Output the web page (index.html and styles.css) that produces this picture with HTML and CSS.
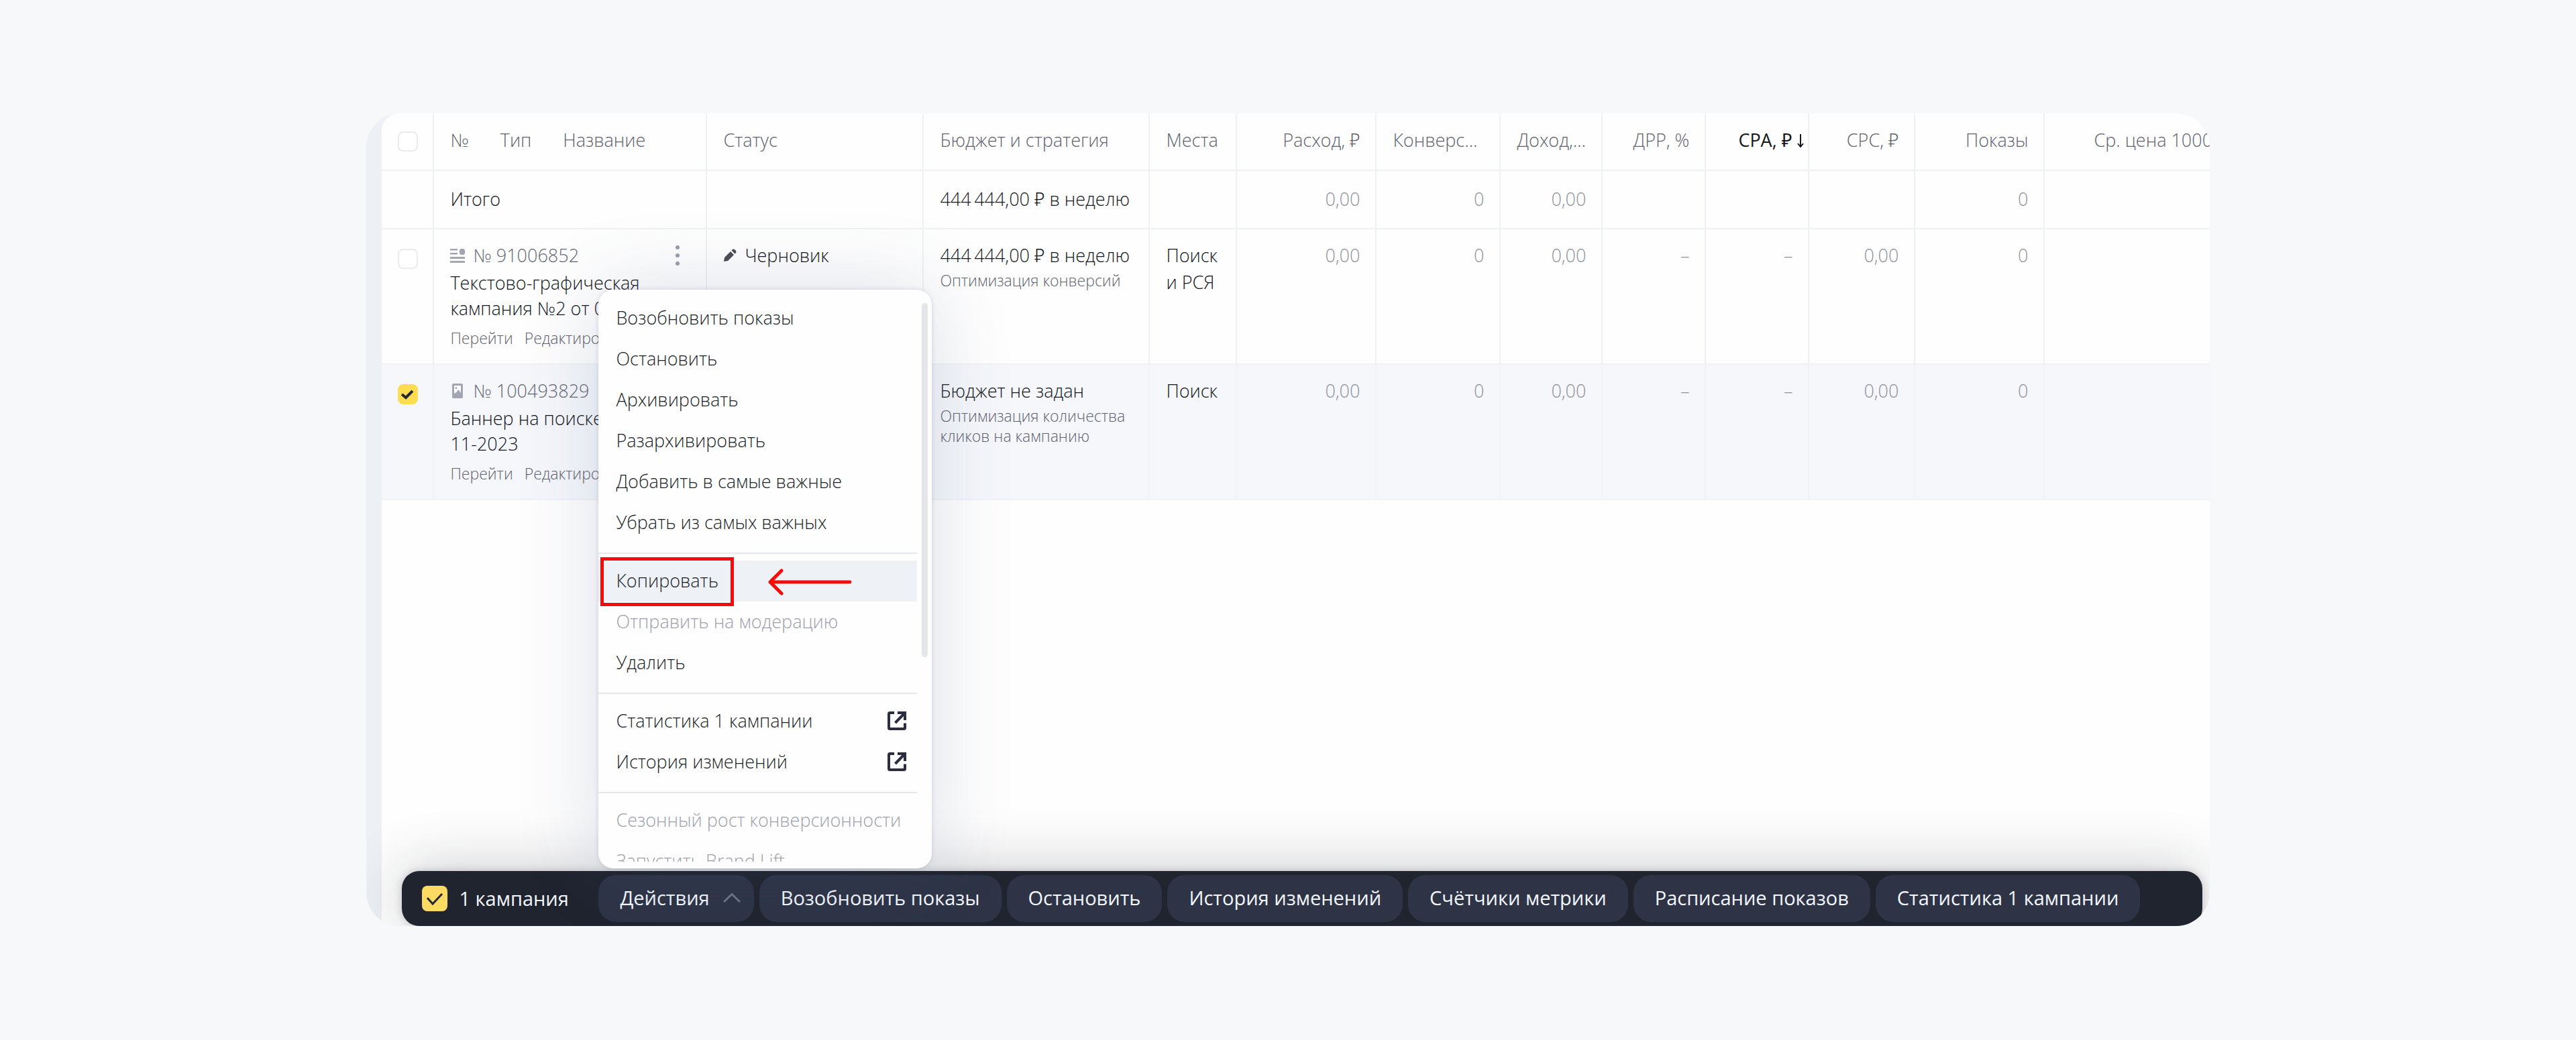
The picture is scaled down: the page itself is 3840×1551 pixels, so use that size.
FILE: index.html
```html
<!DOCTYPE html>
<html lang="ru">
<head>
<meta charset="utf-8">
<title>Кампании</title>
<link rel="stylesheet" href="styles.css">
</head>
<body>
<svg class="sprite" width="0" height="0" aria-hidden="true">
  <symbol id="external" viewBox="0 0 28 28">
    <path d="M10 2H3.500Q2 2 2 3.500V24.500Q2 26 3.500 26H24.500Q26 26 26 24.500V17.500" fill="none" stroke="currentColor" stroke-width="4"/>
    <path d="M15 2H26V13M25.500 2.500L11.500 17" fill="none" stroke="currentColor" stroke-width="4"/>
  </symbol>
</svg>
<main class="frame">
  <div class="sheet">
    <table class="campaigns">
      <colgroup>
        <col class="c-check"><col class="c-name"><col class="c-status"><col class="c-budget"><col class="c-places"><col class="c-cost"><col class="c-conv"><col class="c-income"><col class="c-drr"><col class="c-cpa"><col class="c-cpc"><col class="c-shows"><col>
      </colgroup>
      <thead>
        <tr>
          <th class="check"><input type="checkbox" class="tick" aria-label="Выбрать все"></th>
          <th><span class="titles"><span>№</span><span>Тип</span><span>Название</span></span></th>
          <th>Статус</th>
          <th>Бюджет и стратегия</th>
          <th>Места</th>
          <th class="num">Расход, ₽</th>
          <th>Конверс...</th>
          <th>Доход,...</th>
          <th class="num">ДРР, %</th>
          <th class="sorted"><span>CPA, ₽</span><svg width="10" height="22" viewBox="0 0 10 22" aria-hidden="true"><path d="M5 1V20M1 15L5 20L9 15" fill="none" stroke="currentColor" stroke-width="2"/></svg></th>
          <th class="num">CPC, ₽</th>
          <th class="num">Показы</th>
          <th class="cut">Ср. цена 1000</th>
        </tr>
      </thead>
      <tbody>
        <tr class="total">
          <td></td><td>Итого</td><td></td><td>444&thinsp;444,00 ₽ в неделю</td><td></td>
          <td class="num">0,00</td><td class="num">0</td><td class="num">0,00</td><td></td><td></td><td></td><td class="num">0</td><td></td>
        </tr>
        <tr class="item">
          <td class="check"><input type="checkbox" class="tick" aria-label="Кампания 91006852"></td>
          <td>
            <div class="ident">
              <svg width="22" height="22" viewBox="0 0 22 22" aria-hidden="true"><path d="M0 1H11V3.500H0ZM0 7H11V9.500H0ZM0 13H22V16H0ZM0 19H22V22H0Z" fill="currentColor"/><rect x="14" y="1" width="8" height="9" rx="3" fill="currentColor"/></svg>
              <span>№ 91006852</span>
              <button class="more" aria-label="Ещё"><svg width="6" height="30" viewBox="0 0 6 30"><circle cx="3" cy="3" r="3"/><circle cx="3" cy="15" r="3"/><circle cx="3" cy="27" r="3"/></svg></button>
            </div>
            <div class="name">Текстово-графическая<br>кампания №2 от 0</div>
            <div class="links"><a href="#">Перейти</a><a href="#">Редактиро</a></div>
          </td>
          <td><div class="status"><svg width="20" height="20" viewBox="0 0 20 20" aria-hidden="true"><path d="M1 19L2 13L11 4L16 9L7 18ZM12.500 2.500L14 1Q15.500 0 17 1L19 3Q20 4.500 19 6L17.500 7.500Z" fill="currentColor"/></svg>Черновик</div></td>
          <td>444&thinsp;444,00 ₽ в неделю<div class="sub">Оптимизация конверсий</div></td>
          <td>Поиск<br>и РСЯ</td>
          <td class="num">0,00</td><td class="num">0</td><td class="num">0,00</td><td class="num">–</td><td class="num">–</td><td class="num">0,00</td><td class="num">0</td><td></td>
        </tr>
        <tr class="item selected">
          <td class="check"><input type="checkbox" class="tick" checked aria-label="Кампания 100493829"></td>
          <td>
            <div class="ident">
              <svg width="22" height="22" viewBox="0 0 22 22" aria-hidden="true"><rect x="3" y="0" width="16" height="22" rx="2" fill="currentColor"/><path d="M6 3H16V14L12 9L9.500 13L6 15Z" fill="#fff"/><circle cx="9" cy="6.500" r="1.500" fill="currentColor"/></svg>
              <span>№ 100493829</span>
            </div>
            <div class="name">Баннер на поиске<br>11-2023</div>
            <div class="links"><a href="#">Перейти</a><a href="#">Редактиро</a></div>
          </td>
          <td></td>
          <td>Бюджет не задан<div class="sub">Оптимизация количества кликов на кампанию</div></td>
          <td>Поиск</td>
          <td class="num">0,00</td><td class="num">0</td><td class="num">0,00</td><td class="num">–</td><td class="num">–</td><td class="num">0,00</td><td class="num">0</td><td></td>
        </tr>
      </tbody>
    </table>

    <div class="bar">
      <label class="count"><input type="checkbox" class="tick big" checked>1 кампания</label>
      <div class="dropdown">
        <button class="action">Действия<svg width="26" height="14" viewBox="0 0 26 14" aria-hidden="true"><path d="M1 13L13 1.500L25 13" fill="none" stroke="#6b7488" stroke-width="3"/></svg></button>
        <div class="menu">
          <div class="scroll">
            <div class="group">
              <button>Возобновить показы</button>
              <button>Остановить</button>
              <button>Архивировать</button>
              <button>Разархивировать</button>
              <button>Добавить в самые важные</button>
              <button>Убрать из самых важных</button>
            </div>
            <div class="group">
              <button class="hover">Копировать
                <span class="mark"></span>
                <svg class="pointer" width="124" height="40" viewBox="0 0 124 40" aria-hidden="true"><path d="M122 20H4M20 3L3 20L20 37" fill="none" stroke="#f40b0b" stroke-width="5" stroke-linecap="round" stroke-linejoin="round"/></svg>
              </button>
              <button disabled>Отправить на модерацию</button>
              <button>Удалить</button>
            </div>
            <div class="group">
              <a href="#">Статистика 1 кампании<svg width="28" height="28"><use href="#external"/></svg></a>
              <a href="#">История изменений<svg width="28" height="28"><use href="#external"/></svg></a>
            </div>
            <div class="group">
              <button disabled>Сезонный рост конверсионности</button>
              <button disabled>Запустить Brand Lift</button>
            </div>
          </div>
          <span class="thumb"></span>
        </div>
      </div>
      <button class="action">Возобновить показы</button>
      <button class="action">Остановить</button>
      <button class="action">История изменений</button>
      <button class="action">Счётчики метрики</button>
      <button class="action">Расписание показов</button>
      <button class="action">Статистика 1 кампании</button>
    </div>
  </div>
</main>
</body>
</html>
```
FILE: styles.css
```css
* { box-sizing: border-box; }

body {
  margin: 0;
  min-height: 100vh;
  display: flex;
  padding: 169px 14.230% 170px;
  background: #f6f8fa;
  color: #14161d;
  font: 300 27px/40px "Open Sans", "Noto Sans", sans-serif;
}

.sprite { position: absolute; }

button, input { font: inherit; color: inherit; margin: 0; }
button { border: 0; background: none; padding: 0; text-align: left; }
a { color: inherit; text-decoration: none; }

.frame {
  flex: 1;
  min-width: 0;
  display: flex;
  padding-left: 23px;
  overflow: hidden;
  border-radius: 50px;
  background: #edf1f5;
}

.sheet {
  flex: 1;
  min-width: 0;
  display: flex;
  flex-direction: column;
  border-top-left-radius: 26px;
  background: #fefefe;
}

.campaigns {
  width: 100%;
  table-layout: fixed;
  border-collapse: separate;
  border-spacing: 0;
}

.c-check { width: 78px; }
.c-name { width: 407px; }
.c-status { width: 323px; }
.c-budget { width: 337px; }
.c-places { width: 130px; }
.c-cost { width: 208px; }
.c-conv { width: 185px; }
.c-income { width: 152px; }
.c-drr { width: 154px; }
.c-cpa { width: 154px; }
.c-cpc { width: 158px; }
.c-shows { width: 193px; }

th, td {
  padding: 0 23px 2px 24px;
  border-right: 2px solid #f0f1f5;
  border-bottom: 2px solid #eff1f4;
  text-align: left;
  white-space: nowrap;
}

th:last-child, td:last-child { border-right: 0; }

th {
  height: 86px;
  padding-bottom: 4px;
  color: #5f626e;
  font-weight: 300;
}

.num { text-align: right; }
td.num { color: #8e919b; }

.titles { display: flex; gap: 47px; }

th.sorted {
  padding-right: 6px;
  color: #15171d;
  text-align: right;
  font-weight: 400;
}

.sorted svg { margin-left: 8px; vertical-align: -2px; }

th.cut { padding-left: 73px; padding-right: 0; }

.total td { height: 87px; }

.item td {
  height: 202px;
  padding-top: 19px;
  padding-bottom: 21px;
  vertical-align: top;
}

.selected td { background: #f5f7fb; border-color: #f0f2f7; }

th.check { padding: 0 0 0 24px; }
td.check { padding-left: 24px; padding-right: 0; }

.tick {
  display: block;
  appearance: none;
  width: 30px;
  height: 30px;
  border: 2px solid #e9ebef;
  border-radius: 8px;
  background: #fff;
}

td .tick { margin-top: 10px; }

.tick:checked {
  border: 0;
  background: #ffdc50 url("data:image/svg+xml,%3Csvg xmlns='http://www.w3.org/2000/svg' viewBox='0 0 30 30'%3E%3Cpath d='M6 15L12 20L22 10' fill='none' stroke='%23262833' stroke-width='4'/%3E%3C/svg%3E") center / 100% 100%;
}

.tick.big {
  width: 38px;
  height: 38px;
  background: #fbdb62 url("data:image/svg+xml,%3Csvg xmlns='http://www.w3.org/2000/svg' viewBox='0 0 38 38'%3E%3Cpath d='M8 18L16 27L30 12' fill='none' stroke='%23262833' stroke-width='3'/%3E%3C/svg%3E") center / 100% 100%;
}

.ident {
  display: flex;
  align-items: center;
  gap: 12px;
  margin-bottom: 2px;
  color: #656875;
}

.ident > svg { color: #a2a5b3; }

.more { margin-left: auto; margin-right: 16px; display: flex; fill: #9a9da7; }

.name { line-height: 38px; }

.links {
  display: flex;
  gap: 17px;
  margin-top: 10px;
  color: #5f626e;
  font-size: 23px;
  line-height: 30px;
}

.status { display: flex; align-items: center; gap: 12px; }
.status svg { color: #4a4d57; }

.sub {
  margin-top: 2px;
  color: #5f626e;
  font-size: 23px;
  line-height: 30px;
  white-space: normal;
}

.bar {
  display: flex;
  align-items: center;
  gap: 8px;
  margin: auto 11px 0 30px;
  padding: 6px 0;
  border-radius: 26px;
  background: #20242f;
  box-shadow: 0 0 90px rgba(20, 26, 40, .24), 0 0 12px rgba(20, 26, 40, .2);
  color: #f2f6fd;
  font-size: 29px;
  font-weight: 500;
}

.count {
  display: flex;
  align-items: center;
  gap: 17px;
  width: 285px;
  padding-left: 30px;
  white-space: nowrap;
}

.dropdown { position: relative; }

.action {
  display: flex;
  align-items: center;
  gap: 20px;
  height: 70px;
  padding: 0 32px 2px;
  border-radius: 26px;
  background: #2e3446;
  white-space: nowrap;
}

.dropdown .action { padding-right: 20px; }

.menu {
  position: absolute;
  left: 0;
  bottom: calc(100% + 10px);
  width: 497px;
  height: 863px;
  padding: 0 22px 10px 0;
  border-radius: 22px;
  background: #fefefe;
  box-shadow: 0 0 120px rgba(70, 85, 130, .18), 0 0 6px rgba(70, 85, 130, .2);
  color: #1c1f28;
  font-size: 27px;
  font-weight: 300;
}

.scroll { height: 100%; overflow: hidden; padding-top: 12px; }

.group + .group {
  margin-top: 14px;
  padding-top: 10px;
  border-top: 2px solid #e3e8ec;
}

.group > * {
  position: relative;
  display: flex;
  align-items: center;
  justify-content: space-between;
  width: 100%;
  height: 61px;
  padding: 0 16px 1px 26px;
  white-space: nowrap;
}

.group > :disabled { color: #9da0ab; }
.group > .hover { background: #eef1f5; }

.group svg { color: #2b2e40; }

.mark {
  position: absolute;
  left: 3px;
  top: -5px;
  width: 199px;
  height: 73px;
  border: 5px solid #f40b0b;
}

.pointer { position: absolute; left: 253px; top: 12px; }

.thumb {
  position: absolute;
  right: 6px;
  top: 20px;
  width: 9px;
  height: 528px;
  border-radius: 5px;
  background: #e4e6ea;
}
```
